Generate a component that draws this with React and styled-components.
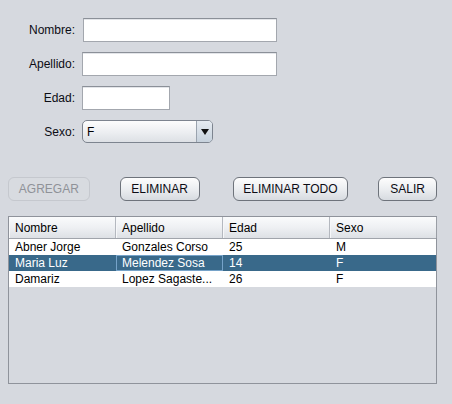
import React from "react";
import styled, { createGlobalStyle } from "styled-components";

const Global = createGlobalStyle`
  html, body { margin: 0; padding: 0; background: #d6d9df; }
  body { font-family: "Liberation Sans", Arial, sans-serif; font-size: 12px; color: #000; }
  * { box-sizing: border-box; }
`;

const Page = styled.div`
  width: 452px;
  height: 404px;
  padding: 18px 15px 0 8px;
  display: flex;
  flex-direction: column;
  background: #d6d9df;
`;

const Form = styled.div`
  display: grid;
  grid-template-columns: 67px auto;
  column-gap: 7px;
  row-gap: 10px;
  align-items: center;
  justify-items: start;
`;

const Label = styled.label`
  justify-self: end;
  font-size: 12px;
  color: #0c0c14;
`;

const TextField = styled.div`
  width: ${(p) => p.$w}px;
  height: 24px;
  margin-left: ${(p) => p.$shift || 0}px;
  background: #fff;
  border: 1px solid #a3a7ae;
  border-top-color: #8b9098;
  box-shadow: inset 0 1px 0 #e3e5e9;
`;

const Combo = styled.div`
  width: 131px;
  height: 23px;
  display: flex;
  align-items: stretch;
  border: 1px solid #7d848f;
  border-radius: 5px;
  overflow: hidden;
  background: linear-gradient(#fdfdfd, #eceef1 55%, #dde0e5);
`;

const ComboValue = styled.div`
  flex: 1;
  padding-left: 4px;
  display: flex;
  align-items: center;
  font-size: 12px;
`;

const ComboArrow = styled.div`
  width: 16px;
  border-left: 1px solid #9aa3ae;
  background: linear-gradient(#e6ebf1, #c6d1dc);
  display: flex;
  align-items: center;
  justify-content: center;
  &::after {
    content: "";
    border-left: 4px solid transparent;
    border-right: 4px solid transparent;
    border-top: 6px solid #111;
  }
`;

const Buttons = styled.div`
  margin-top: 34px;
  display: flex;
`;

const Button = styled.button`
  width: ${(p) => p.$w}px;
  margin-left: ${(p) => p.$gap || 0}px;
  height: 24px;
  padding: 0;
  font-family: "Liberation Sans", Arial, sans-serif;
  font-size: 12px;
  border-radius: 6px;
  border: 1px solid ${(p) => (p.disabled ? "#c5c8ce" : "#6e737b")};
  color: ${(p) => (p.disabled ? "#8f9298" : "#0c0c14")};
  background: ${(p) =>
    p.disabled
      ? "#d8dbe0"
      : "linear-gradient(#fdfdfd, #eceef1 50%, #d7dbe0)"};
`;

const Table = styled.div`
  margin-top: 15px;
  height: 168px;
  border: 1px solid #8f939b;
  display: flex;
  flex-direction: column;
`;

const Row = styled.div`
  display: grid;
  grid-template-columns: repeat(4, 107px);
  height: ${(p) => (p.$head ? 22 : 16)}px;
  background: ${(p) => (p.$head ? "linear-gradient(#fafbfc, #eef0f3 50%, #dde0e5)" : p.$sel ? "#39698a" : "#fff")};
  color: ${(p) => (p.$sel ? "#fff" : "#000")};
  border-bottom: ${(p) => (p.$head ? "1px solid #a0a4ab" : "none")};
`;

const HeadCell = styled.div`
  padding-left: 6px;
  display: flex;
  align-items: center;
  border-right: 1px solid #b4b8bf;
  box-shadow: inset 1px 0 0 #f6f7f9;
  &:last-child { border-right: 1px solid #9a9ea5; }
`;

const Cell = styled.div`
  display: flex;
  align-items: center;
  white-space: nowrap;
  overflow: hidden;
  border: 1px solid ${(p) => (p.$focus ? "#76a3c9" : "transparent")};
  border-left-width: ${(p) => (p.$focus ? 1 : 0)}px;
  padding-left: ${(p) => (p.$focus ? 5 : 6)}px;
`;

const rows = [
  ["Abner Jorge", "Gonzales Corso", "25", "M"],
  ["Maria Luz", "Melendez Sosa", "14", "F"],
  ["Damariz", "Lopez Sagaste...", "26", "F"],
];

export default function App() {
  return (
    <>
      <Global />
      <Page>
        <Form>
          <Label>Nombre:</Label>
          <TextField $w={194} $shift={1} />
          <Label>Apellido:</Label>
          <TextField $w={195} />
          <Label>Edad:</Label>
          <TextField $w={88} />
          <Label>Sexo:</Label>
          <Combo>
            <ComboValue>F</ComboValue>
            <ComboArrow />
          </Combo>
        </Form>
        <Buttons>
          <Button $w={82} disabled>AGREGAR</Button>
          <Button $w={80} $gap={30}>ELIMINAR</Button>
          <Button $w={116} $gap={33}>ELIMINAR TODO</Button>
          <Button $w={59} $gap={30}>SALIR</Button>
        </Buttons>
        <Table>
          <Row $head>
            <HeadCell>Nombre</HeadCell>
            <HeadCell>Apellido</HeadCell>
            <HeadCell>Edad</HeadCell>
            <HeadCell>Sexo</HeadCell>
          </Row>
          {rows.map((r, i) => (
            <Row key={i} $sel={i === 1}>
              {r.map((c, j) => (
                <Cell key={j} $focus={i === 1 && j === 1}>{c}</Cell>
              ))}
            </Row>
          ))}
        </Table>
      </Page>
    </>
  );
}
